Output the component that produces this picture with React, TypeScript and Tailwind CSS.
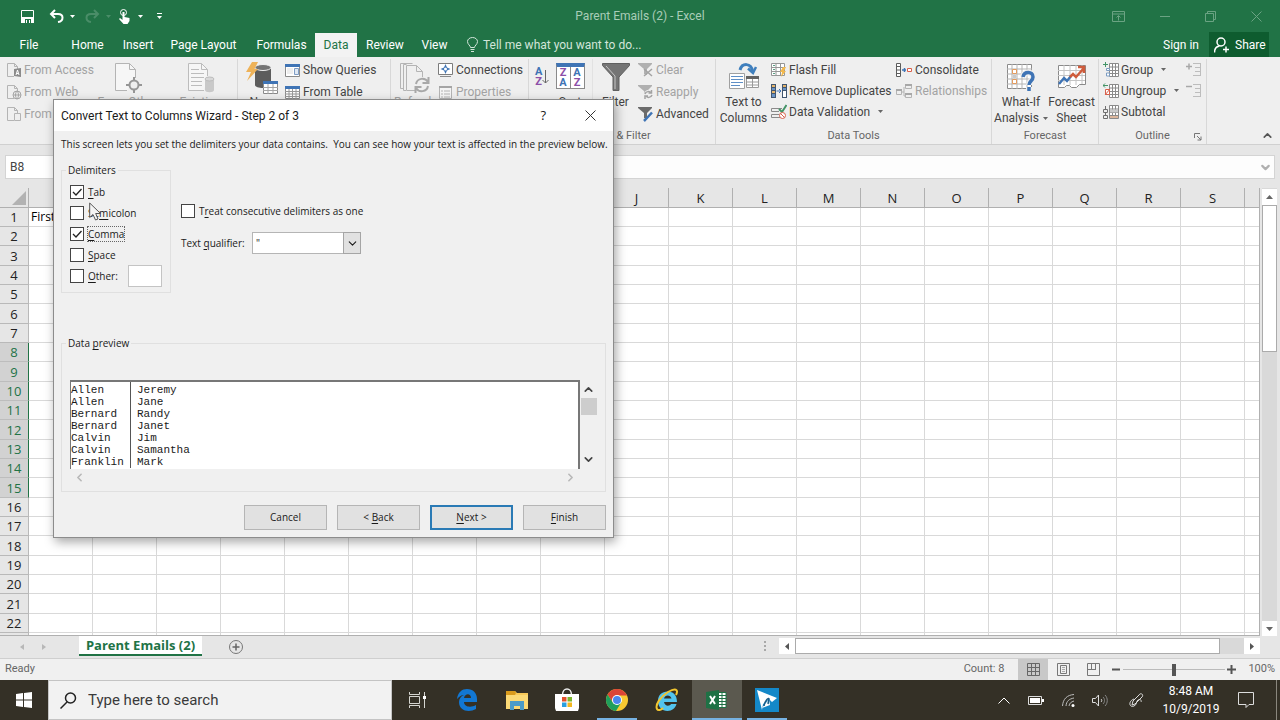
import type { ReactNode } from "react";
import clsx from "clsx";
import { ChevronDown, ChevronLeft, ChevronRight, ChevronUp } from "lucide-react";

const TABS = [
  { name: "File", width: "w-[58px]" },
  { name: "Home", width: "w-[59px]" },
  { name: "Insert", width: "w-[42px]" },
  { name: "Page Layout", width: "w-[89px]" },
  { name: "Formulas", width: "w-[67px]" },
  { name: "Data", width: "w-[42px]" },
  { name: "Review", width: "w-[56px]" },
  { name: "View", width: "w-[43px]" },
];

const COLUMNS = "ABCDEFGHIJKLMNOPQRS".split("");
const ROWS = Array.from({ length: 22 }, (_, i) => i + 1);

const PREVIEW = [
  ["Allen", "Jeremy"],
  ["Allen", "Jane"],
  ["Bernard", "Randy"],
  ["Bernard", "Janet"],
  ["Calvin", "Jim"],
  ["Calvin", "Samantha"],
  ["Franklin", "Mark"],
];

function Svg({ w, h, children }: { w: number; h: number; children: ReactNode }) {
  return (
    <svg width={w} height={h} viewBox={`0 0 ${w} ${h}`} fill="none" className="shrink-0" aria-hidden="true">
      {children}
    </svg>
  );
}

function Caret({ className }: { className?: string }) {
  return (
    <svg width="5" height="3" viewBox="0 0 5 3" className={clsx("shrink-0", className)} aria-hidden="true">
      <path d="M0 0h5L2.5 3z" fill="currentColor" />
    </svg>
  );
}

/* ---------- small ribbon icons (16px) ---------- */

function PageIcon({ kind }: { kind: "access" | "web" | "text" }) {
  return (
    <Svg w={15} h={16}>
      <path d="M7 14.500H.5V1.500h7l3 3V7" stroke="#b4b4b4" />
      <path d="M7.500 1.500v3h3" stroke="#b4b4b4" />
      {kind === "access" && (
        <>
          <path d="M7 7l7-1v9l-7-1z" fill="#8b8b8b" />
          <path d="M9 13l1.500-5 1.500 5M9.500 11.500h2" stroke="#fff" />
        </>
      )}
      {kind === "web" && (
        <>
          <circle cx="10" cy="11" r="4" fill="#eee" stroke="#a5a5a5" />
          <path d="M6 11h8M10 7c-2 2-2 6 0 8c2-2 2-6 0-8" stroke="#a5a5a5" />
        </>
      )}
      {kind === "text" && <path d="M7.500 7.500h6v7h-6z" fill="#eee" stroke="#b4b4b4" />}
    </Svg>
  );
}

function TableIcon({ pane }: { pane?: boolean }) {
  return (
    <Svg w={16} h={16}>
      <path d="M.5 2.500h14v12H.5z" fill="#fff" stroke="#8a8a8a" />
      <path d="M0 2h15v3H0z" fill="#3f74b5" />
      {pane ? (
        <>
          <path d="M2 7h6M2 9h6M2 11h6" stroke="#ddd" />
          <path d="M9.500 6.500h4v6h-4z" fill="#dfe8f3" stroke="#7e9cc4" />
        </>
      ) : (
        <path d="M0 7.500h15M0 10h15M0 12.500h15M4 5v10M7.500 5v10M11 5v10" stroke="#9a9a9a" />
      )}
    </Svg>
  );
}

function ConnectionsIcon() {
  return (
    <Svg w={16} h={16}>
      <path d="M.5 1.500h14v11H.5z" fill="#fff" stroke="#7c7c7c" />
      <path d="M7.500 2l1.500 3.500L12.500 7 9 8.500 7.500 12 6 8.500 2.500 7 6 5.500z" fill="#3f74b5" />
      <circle cx="7.500" cy="7" r="1.500" fill="#fff" />
      <path d="M2 14.500h11" stroke="#8a8a8a" />
    </Svg>
  );
}

function PropertiesIcon() {
  return (
    <Svg w={16} h={16}>
      <path d="M1.500 2.500h12v12h-12z" fill="#f4f4f4" stroke="#b4b4b4" />
      <path d="M1 3h13" stroke="#a5a5a5" strokeWidth="2" />
      <path d="M3 7h2M3 10h2M3 13h2M6 7h6M6 10h6M6 13h6" stroke="#b4b4b4" />
    </Svg>
  );
}

function FunnelIcon({ kind }: { kind: "clear" | "reapply" | "advanced" }) {
  const color = kind === "advanced" ? "#6b6b6b" : "#b0b0b0";
  return (
    <Svg w={16} h={16}>
      <path d="M0 1h14v1L9 7v6l-3-1V7L0 2z" fill={color} />
      {kind === "clear" && <path d="M6 7l8 7M14 7l-8 7" stroke="#a3a3a3" strokeWidth="1.500" />}
      {kind === "reapply" && (
        <>
          <circle cx="10.500" cy="10.500" r="4.500" fill="#efefef" />
          <path d="M7 10c1-3 5-3 6-1M14 11c-1 3-5 3-6 1M13.500 6v3h-3M7 15v-3h3" stroke="#a3a3a3" strokeWidth="1.500" />
        </>
      )}
      {kind === "advanced" && <path d="M14 6.500l-6 6.500-2 2" stroke="#3f74b5" strokeWidth="2.500" />}
    </Svg>
  );
}

function FlashFillIcon() {
  return (
    <Svg w={16} h={16}>
      <path d="M.5 1.500h13v12H.5zM0 5.500h14M0 9.500h14M5 1v13M9.500 1v13" fill="#fff" stroke="#969696" />
      <path d="M2 3.500h2M2 7.500h2M2 11.500h2" stroke="#58a083" />
      <path d="M12 5l-3 5h2l-1 5 5-6h-2l2-4z" fill="#f3b94d" />
    </Svg>
  );
}

function DuplicatesIcon() {
  return (
    <Svg w={16} h={16}>
      <path d="M0 1h5v14H0zM11 1h5v14h-5z" fill="#42566f" />
      <path d="M1 2h3v2H1zM1 8h3v2H1zM12 2h3v2h-3z" fill="#e5b56c" />
      <path d="M1 5h3v2H1zM1 11h3v3H1zM12 5h3v2h-3z" fill="#6a94c7" />
      <path d="M12 8h3v6h-3z" fill="#fff" />
      <path d="M5.500 8H10M8 6l2 2-2 2" stroke="#3f74b5" />
    </Svg>
  );
}

function ValidationIcon() {
  return (
    <Svg w={16} h={16}>
      <path d="M11 4.500H.5v3H8M8 10.500H.5v3H9" stroke="#8a8a8a" />
      <path d="M8 5l3 3 4.500-7" stroke="#439467" strokeWidth="2" />
      <circle cx="11.500" cy="11.500" r="3" fill="#fff" stroke="#d8614c" />
      <path d="M9.500 9.500l4 4" stroke="#d8614c" />
    </Svg>
  );
}

function ConsolidateIcon() {
  return (
    <Svg w={17} h={16}>
      <path d="M.5 1.500h4v13h-4zM0 4.500h5M0 8h5M0 11.500h5" fill="#fff" stroke="#5c5c5c" />
      <path d="M6 8h4M8.500 6v4" stroke="#3f74b5" strokeWidth="1.500" />
      <path d="M11.500 6.500h4v3h-4z" fill="#fff" stroke="#d8614c" />
    </Svg>
  );
}

function RelationsIcon() {
  return (
    <Svg w={17} h={16}>
      <path d="M.5 6.500h5v5h-5zM9.500 1.500h6v4h-6zM9.500 10.500h6v4h-6zM6 9h2M8 4v9h1" stroke="#b4b4b4" />
      <path d="M0 7h6M9 2h7M9 11h7" stroke="#a8a8a8" strokeWidth="2" />
    </Svg>
  );
}

function OutlineIcon({ kind }: { kind: "group" | "ungroup" | "subtotal" }) {
  return (
    <Svg w={16} h={16}>
      <path d="M6.500 1.500h9v13h-9zM6 5h10M6 8.500h10M6 11.500h10M9.500 1v14M12.500 1v14" fill="#fff" stroke="#8a8a8a" />
      {kind === "subtotal" ? (
        <>
          <path d="M.5 5.500h4v3h-4zM.5 11.500h4v3h-4zM2.500 2v3M2.500 9v2" stroke="#6f6f6f" />
          <path d="M7 5.500h8v3H7z" fill="#c9c9c9" />
          <path d="M7 12h8v2H7z" fill="#ddb79d" />
        </>
      ) : (
        <>
          <path d={kind === "group" ? "M0 2.500h5M2.500 0v5" : "M5 2.500H0M2 .5l-2 2 2 2"} stroke="#439467" />
          <path
            d={kind === "group" ? "M3.500 6.500h3v2h-3zM3.500 11h3v3h-3z" : "M2.500 6.500h4v5h-4zM2 12l5-6"}
            fill="#fff"
            stroke={kind === "group" ? "#7b9cc2" : "#d8614c"}
          />
        </>
      )}
    </Svg>
  );
}

function DetailIcon({ plus }: { plus?: boolean }) {
  return (
    <Svg w={16} h={16}>
      <path d={plus ? "M0 4.500h6M3 1.500v6" : "M0 3.500h6"} stroke="#a8a8a8" strokeWidth="1.500" />
      <path d="M7 1.500h8M9 5.500h6M9 9.500h6M7 13.500h8M14.500 1v13" stroke="#bdbdbd" />
    </Svg>
  );
}

/* ---------- large ribbon icons ---------- */

function OtherSourcesIcon() {
  return (
    <Svg w={28} h={32}>
      <path d="M13 28.500H1.500v-27h14l6 6V16" fill="#f6f6f6" stroke="#b4b4b4" />
      <path d="M15.500 1.500v6h6" stroke="#b4b4b4" />
      <circle cx="20" cy="23" r="4.500" fill="#eee" stroke="#969696" strokeWidth="2" />
      <path d="M20 15v4M20 27v4M12 23h4M24 23h4" stroke="#969696" strokeWidth="2" />
    </Svg>
  );
}

function ExistingIcon() {
  return (
    <Svg w={28} h={32}>
      <path d="M17 28.500H1.500v-27h13l6 6V14" fill="#f6f6f6" stroke="#bcbcbc" />
      <path d="M14.500 1.500v6h6M4 7.500h8M4 11.500h13M4 15.500h13M4 19.500h11M4 23.500h11" stroke="#bcbcbc" />
      <path d="M18 17v11c0 3 9 3 9 0V17" fill="#c9c9c9" />
      <ellipse cx="22.500" cy="17" rx="4.500" ry="2" fill="#d8d8d8" stroke="#bcbcbc" />
    </Svg>
  );
}

function NewQueryIcon() {
  return (
    <Svg w={32} h={32}>
      <path d="M9 6v17c0 4 16 4 16 0V6" fill="#5c5c5c" />
      <ellipse cx="17" cy="5.500" rx="8" ry="3" fill="#747474" stroke="#efefef" />
      <path d="M6 0h6L8.500 7H12L1 19l4-9H0z" fill="#eeb258" />
      <path d="M17.500 19.500h14v12h-14z" fill="#fff" stroke="#8a8a8a" />
      <path d="M17 19h15v3H17z" fill="#3f74b5" />
      <path d="M17 25.500h15M17 28.500h15M22 22v10M27 22v10" stroke="#a5a5a5" />
    </Svg>
  );
}

function RefreshIcon() {
  return (
    <Svg w={30} h={32}>
      <path d="M3 26.500H.5v-25h12M6 28.500H3.500v-26h3" stroke="#b4b4b4" />
      <path d="M15 28.500H6.500v-25h10l6 6V15M16.500 3.500v6h6" stroke="#b4b4b4" />
      <circle cx="22" cy="23" r="7" fill="#efefef" />
      <path d="M16 22c1-6 9-7 12-2M28 24c-1 6-9 7-12 2M28.500 15v6h-6M15.500 31v-6h6" stroke="#a8a8a8" strokeWidth="2" />
    </Svg>
  );
}

function LetterPair({ top, bottom }: { top: string; bottom: string }) {
  return (
    <span className="flex flex-col text-[11px] leading-[10px] font-bold">
      <span className={top === "A" ? "text-[#3f74b5]" : "text-[#8d4fa8]"}>{top}</span>
      <span className={bottom === "A" ? "text-[#3f74b5]" : "text-[#8d4fa8]"}>{bottom}</span>
    </span>
  );
}

function SortIcon() {
  return (
    <span className="mt-px flex h-[26px] w-[29px] border border-t-4 border-[#8a8a8a] border-t-[#3f74b5] bg-white">
      <span className="flex flex-1 items-center justify-center border-r border-[#8a8a8a]">
        <LetterPair top="Z" bottom="A" />
      </span>
      <span className="flex flex-1 items-center justify-center">
        <LetterPair top="A" bottom="Z" />
      </span>
    </span>
  );
}

function FilterIcon() {
  return (
    <Svg w={28} h={32}>
      <path d="M.5 1.500h27v2L17 15v13.500h-6V15L.5 3.500z" fill="#757575" stroke="#606060" />
      <path d="M4 4l9 10v13" stroke="#c7c7c7" />
    </Svg>
  );
}

function TextToColumnsIcon() {
  return (
    <Svg w={32} h={32}>
      <path d="M1.500 11.500h15v15h-15z" fill="#fff" stroke="#a0a0a0" />
      <path d="M3 14.500h12M3 17.500h12M3 20.500h12M3 23.500h9" stroke="#5f8fc6" />
      <path d="M18.500 14.500h12v11h-12zM24.500 14v12M18 20h13M18 23h13" fill="#fff" stroke="#9a9a9a" />
      <path d="M18 14h13v3H18z" fill="#636363" />
      <path d="M12 8c2-7 11-8 13 2" stroke="#3f7fbd" strokeWidth="3" />
      <path d="M20 6.500l5 4.500 3-6" stroke="#3f7fbd" strokeWidth="2.500" />
    </Svg>
  );
}

function WhatIfIcon() {
  return (
    <Svg w={30} h={32}>
      <path d="M1.500 2.500h24v24h-24z" fill="#fff" stroke="#8a8a8a" />
      <path d="M1 7h25M1 12h25M1 17h25M1 22h25M6 2v25M11 2v25M16 2v25M21 2v25" stroke="#b5b5b5" />
      <path d="M6.500 7.500h4v4h-4zM6.500 17.500h4v4h-4z" fill="#fff" stroke="#e39b5e" />
      <circle cx="8.500" cy="14.500" r="2" fill="#c9c9c9" />
      <path d="M17 15c1-6 10-6 10 0c0 4-4 4-4 8M23 25v4" stroke="#efefef" strokeWidth="6" />
      <path d="M17 15c1-6 10-6 10 0c0 4-4 4-4 8M23 25v4" stroke="#3f74b5" strokeWidth="3.500" />
    </Svg>
  );
}

function ForecastIcon() {
  return (
    <Svg w={30} h={32}>
      <path d="M1.500 3.500h27v19h-6l-3 3h-5l-2-2h-3l-2 2h-6z" fill="#fff" stroke="#8a8a8a" />
      <path d="M1 8.500h27M1 13.500h27M1 18.500h27M7 3v20M13 3v20M19 3v20M25 3v19" stroke="#c4c4c4" />
      <path d="M2 22l5-6 3 3 4-5" stroke="#3f74b5" strokeWidth="2.500" />
      <path d="M13 15l3-3 3 3 8-9M21 5h6v6" stroke="#cf5c3c" strokeWidth="2.500" />
    </Svg>
  );
}

/* ---------- ribbon building blocks ---------- */

function SmallButton({
  icon,
  label,
  muted,
  menu,
  tight,
}: {
  icon: ReactNode;
  label: string;
  muted?: boolean;
  menu?: boolean;
  tight?: boolean;
}) {
  return (
    <button
      className={clsx(
        "flex items-center gap-0.5 whitespace-nowrap",
        tight ? "h-[21px]" : "h-[22px]",
        muted ? "text-[#a3a3a3]" : "text-[#444]",
      )}
    >
      {icon}
      {label}
      {menu && <Caret className="ml-1.5 text-[#666]" />}
    </button>
  );
}

function BigButton({
  icon,
  lines,
  width,
  muted,
  menu,
}: {
  icon: ReactNode;
  lines: string[];
  width: string;
  muted?: boolean;
  menu?: boolean;
}) {
  return (
    <button
      className={clsx("flex shrink-0 flex-col items-center pt-[3px] leading-4", width, muted ? "text-[#a3a3a3]" : "text-[#444]")}
    >
      <span className="flex h-8 items-start justify-center">{icon}</span>
      {lines.map((line, i) => (
        <span key={line} className="flex items-center gap-1 whitespace-nowrap">
          {line}
          {menu && i === lines.length - 1 && <Caret className="text-[#666]" />}
        </span>
      ))}
    </button>
  );
}

function Group({ label, width, children, launcher }: { label: string; width: string; children: ReactNode; launcher?: boolean }) {
  return (
    <section className={clsx("flex shrink-0 flex-col border-r border-[#d8d8d8]", width)}>
      <div className="flex h-[68px] overflow-hidden">{children}</div>
      <div className="flex h-[17px] items-center pt-0.5 text-[11px] text-[#666]">
        <span className="flex-1 text-center">{label}</span>
        {launcher && (
          <button aria-label={`${label} settings`} className="-ml-3 w-3 shrink-0">
            <Svg w={8} h={8}>
              <path d="M.5 5V.5H6M3 3l4 4M7 3.500V7H3.500" stroke="#777" />
            </Svg>
          </button>
        )}
      </div>
    </section>
  );
}

function Ribbon() {
  return (
    <div className="flex h-[88px] shrink-0 border-b border-[#d0d0d0] bg-[#efefef] pt-0.5 text-xs">
      <Group label="Get External Data" width="w-[238px]">
        <div className="flex w-[91px] flex-col pl-[7px]">
          <SmallButton muted icon={<PageIcon kind="access" />} label="From Access" />
          <SmallButton muted icon={<PageIcon kind="web" />} label="From Web" />
          <SmallButton muted icon={<PageIcon kind="text" />} label="From Text" />
        </div>
        <BigButton muted width="w-[73px]" icon={<OtherSourcesIcon />} lines={["From Other", "Sources"]} menu />
        <div className="w-px bg-[#e2e2e2]" />
        <BigButton muted width="w-[73px]" icon={<ExistingIcon />} lines={["Existing", "Connections"]} />
      </Group>
      <Group label="Get & Transform" width="w-[153px]">
        <BigButton width="w-[47px]" icon={<NewQueryIcon />} lines={["New", "Query"]} menu />
        <div className="flex flex-col">
          <SmallButton icon={<TableIcon pane />} label="Show Queries" />
          <SmallButton icon={<TableIcon />} label="From Table" />
          <SmallButton icon={<TableIcon pane />} label="Recent Sources" />
        </div>
      </Group>
      <Group label="Connections" width="w-[138px]">
        <BigButton muted width="w-[47px]" icon={<RefreshIcon />} lines={["Refresh", "All"]} menu />
        <div className="flex flex-col">
          <SmallButton icon={<ConnectionsIcon />} label="Connections" />
          <SmallButton muted icon={<PropertiesIcon />} label="Properties" />
          <SmallButton muted icon={<PropertiesIcon />} label="Edit Links" />
        </div>
      </Group>
      <Group label="Sort & Filter" width="w-[187px]">
        <button aria-label="Sort A to Z" className="flex h-9 w-[24px] shrink-0 items-center pl-1.5">
          <LetterPair top="A" bottom="Z" />
          <Svg w={7} h={16}>
            <path d="M3.500 1v13M.5 11l3 3 3-3" stroke="#666" />
          </Svg>
        </button>
        <BigButton width="w-[34px]" icon={<SortIcon />} lines={["Sort"]} />
        <div className="ml-[5px] w-px bg-[#e2e2e2]" />
        <BigButton width="w-[45px]" icon={<FilterIcon />} lines={["Filter"]} />
        <div className="flex flex-col">
          <SmallButton muted icon={<FunnelIcon kind="clear" />} label="Clear" />
          <SmallButton muted icon={<FunnelIcon kind="reapply" />} label="Reapply" />
          <SmallButton icon={<FunnelIcon kind="advanced" />} label="Advanced" />
        </div>
      </Group>
      <Group label="Data Tools" width="w-[276px]">
        <BigButton width="w-[55px]" icon={<TextToColumnsIcon />} lines={["Text to", "Columns"]} />
        <div className="flex w-[125px] flex-col">
          <SmallButton tight icon={<FlashFillIcon />} label="Flash Fill" />
          <SmallButton tight icon={<DuplicatesIcon />} label="Remove Duplicates" />
          <SmallButton tight icon={<ValidationIcon />} label="Data Validation" menu />
        </div>
        <div className="flex flex-col">
          <SmallButton tight icon={<ConsolidateIcon />} label="Consolidate" />
          <SmallButton tight muted icon={<RelationsIcon />} label="Relationships" />
        </div>
      </Group>
      <Group label="Forecast" width="w-[107px]">
        <BigButton width="w-[58px]" icon={<WhatIfIcon />} lines={["What-If", "Analysis"]} menu />
        <BigButton width="w-[43px]" icon={<ForecastIcon />} lines={["Forecast", "Sheet"]} />
      </Group>
      <Group label="Outline" width="w-[108px]" launcher>
        <div className="flex w-[87px] flex-col pl-1">
          <SmallButton tight icon={<OutlineIcon kind="group" />} label="Group" menu />
          <SmallButton tight icon={<OutlineIcon kind="ungroup" />} label="Ungroup" menu />
          <SmallButton tight icon={<OutlineIcon kind="subtotal" />} label="Subtotal" />
        </div>
        <div className="flex flex-col">
          <button aria-label="Show Detail" className="flex h-[21px] items-center">
            <DetailIcon plus />
          </button>
          <button aria-label="Hide Detail" className="flex h-[21px] items-center">
            <DetailIcon />
          </button>
        </div>
      </Group>
      <button aria-label="Collapse the Ribbon" className="mt-auto mr-1.5 mb-0.5 ml-auto text-[#555]">
        <ChevronUp size={13} strokeWidth={3} />
      </button>
    </div>
  );
}

function TitleBar() {
  return (
    <header className="grid h-8 shrink-0 grid-cols-[1fr_auto_1fr] items-center bg-[#217346] text-xs text-[#a9cdb8]">
      <div className="flex items-center pl-[21px] text-white">
        <button aria-label="Save">
          <Svg w={13} h={13}>
            <path d="M.5.5h12v12H2L.5 11z" stroke="#fff" />
            <path d="M0 7h13v6H0z" fill="#fff" />
            <path d="M4 9h6v4H4z" fill="#217346" />
            <path d="M5 10h1v3H5zM8 10h1v3H8z" fill="#fff" />
          </Svg>
        </button>
        <button aria-label="Undo" className="ml-[15px] flex items-center gap-1.5">
          <Svg w={15} h={14}>
            <path d="M6 1L2 5l4 4M2 5h7c6 0 6 7 0 8" stroke="#fff" strokeWidth="2" />
          </Svg>
          <Caret />
        </button>
        <button aria-label="Redo" className="ml-2.5 flex items-center gap-1.5 text-[#4a8d68]">
          <Svg w={15} h={14}>
            <path d="M9 1l4 4-4 4M13 5H6c-6 0-6 7 0 8" stroke="#4a8d68" strokeWidth="2" />
          </Svg>
          <Caret />
        </button>
        <button aria-label="Touch Mode" className="ml-2 flex items-center gap-2">
          <Svg w={11} h={15}>
            <circle cx="4.500" cy="3.500" r="3" stroke="#fff" />
            <path d="M3.500 3h2v5l5 1v3l-2 3h-4L0 10l1-1 2.500 2z" fill="#fff" />
          </Svg>
          <Caret />
        </button>
        <button aria-label="Customize Quick Access Toolbar" className="ml-[14px] flex flex-col gap-0.5">
          <span className="h-px w-[5px] bg-white" />
          <Caret />
        </button>
      </div>
      <h1>Parent Emails (2) - Excel</h1>
      <div className="flex items-center justify-end pr-[18px]">
        <button aria-label="Ribbon Display Options">
          <Svg w={13} h={11}>
            <path d="M.5.5h12v10H.5zM0 3h13M6.500 9.500V5M4.500 6.500l2-2 2 2" stroke="#6ba383" />
          </Svg>
        </button>
        <button aria-label="Minimize" className="ml-[35px]">
          <Svg w={10} h={11}>
            <path d="M0 5.500h10" stroke="#6ba383" />
          </Svg>
        </button>
        <button aria-label="Restore" className="ml-[35px]">
          <Svg w={11} h={11}>
            <path d="M.5 2.500h8v8h-8zM2.500 2V.5h8v8H9" stroke="#6ba383" />
          </Svg>
        </button>
        <button aria-label="Close" className="ml-[35px]">
          <Svg w={11} h={11}>
            <path d="M.5.5l10 10M10.500.5l-10 10" stroke="#6ba383" />
          </Svg>
        </button>
      </div>
    </header>
  );
}

function RibbonTabs() {
  return (
    <nav className="flex h-[25px] shrink-0 items-stretch bg-[#217346] text-xs text-white">
      {TABS.map((tab) => (
        <button
          key={tab.name}
          className={clsx("text-center whitespace-nowrap", tab.width, tab.name === "Data" && "mt-px bg-[#f3f3f3] text-[#217346]")}
        >
          {tab.name}
        </button>
      ))}
      <button className="ml-[11px] flex items-center gap-[5px] text-[#d3e5da]">
        <Svg w={11} h={15}>
          <path d="M3.500 10.500c0-2-3-3-3-6a5 4 0 0 1 10 0c0 3-3 4-3 6zM3.500 12.500h4M4 14.500h3" stroke="#d3e5da" />
        </Svg>
        Tell me what you want to do...
      </button>
      <a href="#signin" className="ml-auto flex items-center">
        Sign in
      </a>
      <button className="mr-[11px] ml-2.5 flex w-[60px] items-center gap-1.5 bg-[#0e5c2f] pl-[5px]">
        <Svg w={15} h={16}>
          <circle cx="7" cy="5" r="4" stroke="#fff" strokeWidth="1.500" />
          <path d="M.5 15.500c0-4 2-6 5-6.500M9 12.500h6M12 9.500v6" stroke="#fff" strokeWidth="1.500" />
        </Svg>
        Share
      </button>
    </nav>
  );
}

function FormulaBar() {
  return (
    <div className="flex h-[43px] shrink-0 gap-2.5 bg-[#e6e6e6] pt-2.5 pr-[5px] pb-[9px] pl-[5px]">
      <input aria-label="Name Box" defaultValue="B8" className="w-[110px] border border-[#d4d4d4] bg-white px-1 text-xs text-[#444]" />
      <div className="flex flex-1 items-center border border-[#d4d4d4] bg-[#fdfdfd] pr-0.5 text-[#b0b0b0]">
        <input aria-label="Formula Bar" className="h-full flex-1 px-1 text-xs text-[#444] outline-none" />
        <ChevronDown size={13} strokeWidth={4} />
      </div>
    </div>
  );
}

function Sheet() {
  return (
    <div className="flex min-h-0 flex-1 bg-[#e6e6e6]">
      <div className="flex-1 overflow-hidden border-r border-b border-[#b0b0b0] bg-white">
        <table className="w-full table-fixed border-separate border-spacing-0 bg-white font-['Open_Sans','Noto_Sans',sans-serif] text-[13px] leading-[18px]">
          <thead>
            <tr className="h-5 bg-[#e6e6e6] text-[#222]">
              <th className="w-[29px] border-r border-b border-[#b0b0b0] p-0">
                <svg width="14" height="14" viewBox="0 0 14 14" className="mr-0.5 ml-auto block" aria-hidden="true">
                  <path d="M14 0v14H0z" fill="#b2b2b2" />
                </svg>
              </th>
              {COLUMNS.map((col) => (
                <th key={col} className="w-16 border-r border-b border-[#b0b0b0] p-0 text-center font-normal">
                  {col}
                </th>
              ))}
              <th className="border-b border-[#b0b0b0] p-0" />
            </tr>
          </thead>
          <tbody>
            {ROWS.map((row) => (
              <tr key={row} className="h-[19px] nth-[3n]:h-5">
                <th
                  className={clsx(
                    "border-r border-b p-0 text-center font-normal",
                    row >= 8 && row <= 15
                      ? "border-r-[#217346] border-b-[#bdbdbd] bg-[#d2d2d2] text-[#217346]"
                      : "border-[#b9b9b9] bg-[#e6e6e6] text-[#222]",
                  )}
                >
                  {row}
                </th>
                {COLUMNS.map((col) => (
                  <td key={col} className="border-r border-b border-[#d9d9d9] p-0 pl-0.5 text-xs whitespace-nowrap text-black">
                    {row === 1 && col === "A" && "First"}
                  </td>
                ))}
                <td className="border-b border-[#d9d9d9] p-0" />
              </tr>
            ))}
            <tr className="h-[19px]">
              <th className="border-r border-[#b9b9b9] bg-[#e6e6e6] p-0" />
              {COLUMNS.map((col) => (
                <td key={col} className="border-r border-[#d9d9d9] p-0" />
              ))}
              <td className="p-0" />
            </tr>
          </tbody>
        </table>
      </div>
      <div className="mr-[3px] ml-[2px] flex w-[15px] flex-col bg-[#d9d9d9] pt-px">
        <button aria-label="Scroll up" className="flex h-4 items-center justify-center bg-white">
          <Svg w={7} h={4}>
            <path d="M0 4h7L3.500 0z" fill="#666" />
          </Svg>
        </button>
        <div className="h-[147px] border border-[#ababab] bg-white" />
        <button aria-label="Scroll down" className="mt-auto flex h-[15px] items-center justify-center bg-white">
          <Svg w={7} h={4}>
            <path d="M0 0h7L3.500 4z" fill="#666" />
          </Svg>
        </button>
      </div>
    </div>
  );
}

function SheetTabs() {
  return (
    <div className="flex h-[23px] shrink-0 items-start border-b border-[#cfcfcf] bg-[#e6e6e6]">
      <div className="flex h-full w-[79px] items-center gap-[18px] pl-5">
        <button aria-label="Previous sheet">
          <Svg w={4} h={6}>
            <path d="M4 0v6L0 3z" fill="#b8b8b8" />
          </Svg>
        </button>
        <button aria-label="Next sheet">
          <Svg w={4} h={6}>
            <path d="M0 0v6l4-3z" fill="#b8b8b8" />
          </Svg>
        </button>
      </div>
      <button className="h-5 w-[123px] border-b-2 border-[#217346] bg-white font-['Open_Sans','Noto_Sans',sans-serif] text-[13px] leading-[18px] font-bold whitespace-nowrap text-[#217346]">
        Parent Emails (2)
      </button>
      <button aria-label="New sheet" className="ml-[27px] flex h-full items-center">
        <Svg w={14} h={14}>
          <circle cx="7" cy="7" r="6.500" stroke="#777" />
          <path d="M7 3.500v7M3.500 7h7" stroke="#666" strokeWidth="1.500" />
        </Svg>
      </button>
      <div className="ml-auto flex h-[18px] items-center pt-0.5">
        <Svg w={3} h={11}>
          <path d="M0 0h2v2H0zM0 4h2v2H0zM0 8h2v2H0z" fill="#a8a8a8" />
        </Svg>
        <div className="ml-3 flex h-4 w-[481px] bg-[#d9d9d9]">
          <button aria-label="Scroll left" className="flex w-4 items-center justify-center bg-white">
            <Svg w={4} h={7}>
              <path d="M4 0v7L0 3.500z" fill="#555" />
            </Svg>
          </button>
          <div className="w-[425px] border border-[#ababab] bg-white" />
          <button aria-label="Scroll right" className="ml-auto flex w-4 items-center justify-center bg-white">
            <Svg w={4} h={7}>
              <path d="M0 0v7l4-3.500z" fill="#555" />
            </Svg>
          </button>
        </div>
        <div className="w-5" />
      </div>
    </div>
  );
}

function StatusBar() {
  return (
    <footer className="flex h-[21px] shrink-0 items-center bg-[#f0f0f0] pr-[5px] pl-[5px] text-[11px] text-[#666]">
      <span>Ready</span>
      <span className="ml-auto">Count: 8</span>
      <button aria-label="Normal view" className="ml-[14px] flex h-full w-[30px] items-center justify-center bg-[#c8c8c8]">
        <Svg w={13} h={13}>
          <path d="M.5.5h12v12H.5zM.5 4.500h12M.5 8.500h12M4.500.5v12M8.500.5v12" stroke="#666" />
        </Svg>
      </button>
      <button aria-label="Page Layout view" className="flex h-full w-[30px] items-center justify-center">
        <Svg w={13} h={13}>
          <path d="M.5.5h12v12H.5zM3.500 2.500h6v8h-6z" stroke="#777" />
          <path d="M5 4.500h3M5 6.500h3M5 8.500h3" stroke="#aaa" />
        </Svg>
      </button>
      <button aria-label="Page Break view" className="flex h-full w-[30px] items-center justify-center">
        <Svg w={13} h={13}>
          <path d="M.5.5h12v12H.5zM4.500.5v6M8.500.5v6M1 6.500h8" stroke="#777" />
        </Svg>
      </button>
      <button aria-label="Zoom out" className="ml-1 flex">
        <Svg w={9} h={9}>
          <path d="M0 4.500h8" stroke="#555" strokeWidth="2" />
        </Svg>
      </button>
      <input
        type="range"
        aria-label="Zoom"
        defaultValue={50}
        className="mx-0.5 h-3 w-[102px] appearance-none bg-[linear-gradient(#bbb,#bbb)] bg-[length:100%_1px] bg-center bg-no-repeat [&::-webkit-slider-thumb]:h-3 [&::-webkit-slider-thumb]:w-1 [&::-webkit-slider-thumb]:appearance-none [&::-webkit-slider-thumb]:bg-[#555]"
      />
      <button aria-label="Zoom in" className="mr-3 flex">
        <Svg w={9} h={9}>
          <path d="M0 4.500h9M4.500 0v9" stroke="#555" strokeWidth="2" />
        </Svg>
      </button>
      <span>100%</span>
    </footer>
  );
}

/* ---------- wizard ---------- */

function Key({ children }: { children: ReactNode }) {
  return <span className="underline underline-offset-2">{children}</span>;
}

function CheckBox({ checked, focused, children, id }: { checked?: boolean; focused?: boolean; children: ReactNode; id: string }) {
  return (
    <div className="flex h-[21px] items-center gap-[3px]">
      <span className="grid">
        <input
          id={id}
          type="checkbox"
          defaultChecked={checked}
          className="peer col-start-1 row-start-1 size-[14px] appearance-none border border-[#444] bg-white"
        />
        <svg width="14" height="14" viewBox="0 0 14 14" className="pointer-events-none invisible col-start-1 row-start-1 peer-checked:visible" aria-hidden="true">
          <path d="M3 7l3 3 5.500-6" fill="none" stroke="#222" strokeWidth="1.300" />
        </svg>
      </span>
      <label htmlFor={id} className={clsx("border leading-[14px]", focused ? "border-dotted border-[#666]" : "border-transparent")}>
        {children}
      </label>
    </div>
  );
}

function WizardButton({ primary, children }: { primary?: boolean; children: ReactNode }) {
  return (
    <button className={clsx("h-[25px] w-[83px] bg-[#e1e1e1]", primary ? "border-2 border-[#2a7ab5]" : "border border-[#b5b5b5]")}>
      {children}
    </button>
  );
}

function Wizard() {
  return (
    <div
      role="dialog"
      aria-labelledby="wizard-title"
      className="absolute top-[99px] left-[53px] flex h-[439px] w-[561px] flex-col border border-[#8c8c8c] bg-[#f0f0f0] font-['Open_Sans','Noto_Sans',sans-serif] text-[10px] text-[#1a1a1a] shadow-[2px_4px_10px_rgba(0,0,0,0.35)]"
    >
      <div className="flex h-[31px] items-center bg-white pr-[17px] pl-[7px]">
        <h2 id="wizard-title" className="font-['Roboto','Noto_Sans',sans-serif] text-xs">
          Convert Text to Columns Wizard - Step 2 of 3
        </h2>
        <button aria-label="Help" className="ml-auto text-[13px]">
          ?
        </button>
        <button aria-label="Close wizard" className="ml-[39px]">
          <Svg w={11} h={11}>
            <path d="M.5.5l10 10M10.500.5l-10 10" stroke="#333" />
          </Svg>
        </button>
      </div>
      <div className="flex flex-1 flex-col px-[7px]">
        <p className="mt-[5px] leading-4 whitespace-pre">
          {"This screen lets you set the delimiters your data contains.  You can see how your text is affected in the preview below."}
        </p>
        <div className="mt-2.5 flex">
          <fieldset className="flex h-[131px] w-[110px] flex-col border border-[#e0e0e0] pt-[3px] pl-2">
            <legend className="-ml-1 px-0.5 leading-4">Delimiters</legend>
            <CheckBox id="tab" checked>
              <Key>T</Key>ab
            </CheckBox>
            <CheckBox id="semicolon">
              Se<Key>m</Key>icolon
            </CheckBox>
            <CheckBox id="comma" checked focused>
              <Key>C</Key>omma
            </CheckBox>
            <CheckBox id="space">
              <Key>S</Key>pace
            </CheckBox>
            <div className="flex items-center justify-between pr-2">
              <CheckBox id="other">
                <Key>O</Key>ther:
              </CheckBox>
              <input aria-label="Other delimiter" className="h-[22px] w-[34px] border border-[#c4c4c4] bg-white px-1" />
            </div>
          </fieldset>
          <div className="mt-[38px] ml-[10px] flex flex-col">
            <CheckBox id="consecutive">
              T<Key>r</Key>eat consecutive delimiters as one
            </CheckBox>
            <div className="mt-[11px] flex items-center">
              <label htmlFor="qualifier" className="w-[71px] whitespace-nowrap">
                Text <Key>q</Key>ualifier:
              </label>
              <span className="grid h-[22px] w-[109px]">
                <select
                  id="qualifier"
                  defaultValue={'"'}
                  className="col-start-1 row-start-1 appearance-none border border-[#b5b5b5] bg-white pl-[3px] leading-4"
                >
                  <option>{'"'}</option>
                  <option>{"'"}</option>
                  <option>{"{none}"}</option>
                </select>
                <span className="pointer-events-none col-start-1 row-start-1 flex w-[18px] items-center justify-center justify-self-end border border-[#a5a5a5] bg-[#e1e1e1]">
                  <ChevronDown size={13} strokeWidth={2} />
                </span>
              </span>
            </div>
          </div>
        </div>
        <fieldset className="mt-[42px] h-[157px] border border-[#e0e0e0] px-2">
          <legend className="-ml-1 px-0.5 leading-4">
            Data <Key>p</Key>review
          </legend>
          <div className="mt-[29px] flex h-[89px]">
            <div className="flex-1 overflow-hidden border-t-2 border-r-2 border-l border-[#777] bg-white">
              <table className="w-full table-fixed border-separate border-spacing-0 font-['Liberation_Mono',monospace] text-[11px] leading-3">
                <tbody>
                  {PREVIEW.map(([last, first], i) => (
                    <tr key={i} className="group">
                      <td className="w-[60px] border-r border-[#555] p-0 group-first:pt-[2px]">{last}</td>
                      <td className="p-0 pl-1.5 group-first:pt-[2px]">{first}</td>
                    </tr>
                  ))}
                </tbody>
              </table>
            </div>
            <div className="flex w-[17px] flex-col items-center py-[3px] text-[#444]">
              <ChevronUp size={13} strokeWidth={3} className="shrink-0" />
              <div className="mt-0.5 h-[17px] w-4 shrink-0 bg-[#cdcdcd]" />
              <ChevronDown size={13} strokeWidth={3} className="mt-auto shrink-0" />
            </div>
          </div>
          <div className="mt-[2px] mr-5 ml-[3px] flex justify-between text-[#b8b8b8]">
            <ChevronLeft size={13} strokeWidth={3} />
            <ChevronRight size={13} strokeWidth={3} />
          </div>
        </fieldset>
        <div className="mt-[13px] flex justify-end gap-[10px]">
          <WizardButton>Cancel</WizardButton>
          <WizardButton>
            &lt; <Key>B</Key>ack
          </WizardButton>
          <WizardButton primary>
            <Key>N</Key>ext &gt;
          </WizardButton>
          <WizardButton>
            <Key>F</Key>inish
          </WizardButton>
        </div>
      </div>
    </div>
  );
}

function Pointer() {
  return (
    <svg width="13" height="19" viewBox="0 0 13 19" className="pointer-events-none absolute top-[202px] left-[89px]" aria-hidden="true">
      <path d="M.7 1v14.500l3.300-3 2.500 5.500 2.500-1-2.300-5.500H11.500z" fill="#f4f4f4" stroke="#555" />
    </svg>
  );
}

/* ---------- taskbar ---------- */

function EdgeIcon() {
  return (
    <Svg w={20} h={22}>
      <path
        d="M0 10C1 3 5 0 10 0c6 0 10 4 10 10v3H7c0 5 7 6 12 3v4c-7 4-17 2-17-7c0-3 2-6 5-7C4 6 2 8 0 10zM7 9h7c0-5-6-5-7 0z"
        fill="#1277d3"
      />
    </Svg>
  );
}

function FolderIcon() {
  return (
    <Svg w={22} h={19}>
      <path d="M0 0h9l2 2h11v16H0z" fill="#f7c95a" />
      <path d="M0 0h9l1 2-1 2H0z" fill="#d99a1c" />
      <path d="M0 4h22v14H0z" fill="#fbd976" />
      <path d="M4 10h14v9h-4v-4H8v4H4z" fill="#4a9bc9" />
    </Svg>
  );
}

function StoreIcon() {
  return (
    <Svg w={24} h={24}>
      <path d="M7.500 7c0-8 9-8 9 0" stroke="#eee" strokeWidth="1.500" />
      <path d="M0 6h24v14l-1 3H1l-1-3z" fill="#fff" />
      <path d="M7 9h4.500v4.500H7z" fill="#e2512c" />
      <path d="M12.500 9H17v4.500h-4.500z" fill="#7bb52c" />
      <path d="M7 14.500h4.500V19H7z" fill="#2a9fe0" />
      <path d="M12.500 14.500H17V19h-4.500z" fill="#f3b71f" />
    </Svg>
  );
}

function ChromeIcon() {
  return (
    <Svg w={22} h={22}>
      <circle cx="11" cy="11" r="11" fill="#f8c931" />
      <path d="M1.500 5.500a11 11 0 0 1 19 0L21 6.500H11L6.500 13z" fill="#dc4437" />
      <path d="M1.500 5.500A11 11 0 0 0 10 22l5.500-9h-9z" fill="#1f9f5b" />
      <circle cx="11" cy="11" r="5" fill="#fff" />
      <circle cx="11" cy="11" r="4" fill="#4a86ee" />
    </Svg>
  );
}

function IeIcon() {
  return (
    <Svg w={24} h={24}>
      <path
        d="M3 13C3 7 7 3.500 12.500 3.500c6 0 9.500 4 9.500 10.500H9c1 5 6 4 7 2h5.500c-1 4-4.500 7-9 7C7 23 3 19 3 13zM9 10.500h7.500c-1-4-6.500-4-7.500 0z"
        fill="#52c4ee"
      />
      <path d="M21 7c3-6-1-7-8-3C5 9 0 17 2 21c1 2 4 1 6-1" stroke="#f2c52f" strokeWidth="2" />
    </Svg>
  );
}

function ExcelIcon() {
  return (
    <Svg w={22} h={20}>
      <path d="M11 2.500h9v15h-9z" fill="#fff" stroke="#1e7145" />
      <path d="M12 5.500h8M12 8.500h8M12 11.500h8M12 14.500h8M16 3v14" stroke="#1e7145" />
      <path d="M0 2l13-2v20L0 18z" fill="#1e7145" />
      <path d="M4 6l5 8M9 6l-5 8" stroke="#fff" strokeWidth="2" />
    </Svg>
  );
}

function PlayerIcon() {
  return (
    <Svg w={24} h={24}>
      <path d="M0 0h24v24H0z" fill="#1488c8" />
      <path d="M2 2l20 8-5 4-3-3-6 5-1 6z" fill="#fff" />
      <path d="M7 20l7-9 1 6z" fill="#fff" />
      <path d="M9 18c1-6 5-9 5-7l-1 5" stroke="#1a5c86" strokeWidth="1.500" />
    </Svg>
  );
}

function TaskButton({ label, active, open, children }: { label: string; active?: boolean; open?: boolean; children: ReactNode }) {
  return (
    <button aria-label={label} className={clsx("flex w-[50px] flex-col items-center", active && "bg-[#5b594f]")}>
      <span className="flex h-full items-center">{children}</span>
      <span className={clsx("-mt-0.5 h-0.5 shrink-0", active ? "w-full bg-[#76b2e2]" : open && "w-10 bg-[#76b2e2]")} />
    </button>
  );
}

function Taskbar() {
  return (
    <div className="flex h-10 shrink-0 items-stretch bg-[#343026] text-white">
      <button aria-label="Start" className="flex w-12 items-center justify-center">
        <Svg w={16} h={16}>
          <path d="M0 2l7-1v6.500H0zM8 1l8-1v7.500H8zM0 8.500h7V15l-7-1zM8 8.500h8V16l-8-1z" fill="#fff" />
        </Svg>
      </button>
      <label className="flex w-[344px] items-center gap-[11px] border border-[#c4c4c4] bg-[#f2f2f2] pl-[11px]">
        <Svg w={17} h={17}>
          <circle cx="10.500" cy="6" r="5" stroke="#222" strokeWidth="1.500" />
          <path d="M7 10l-6.500 6.500" stroke="#222" strokeWidth="1.500" />
        </Svg>
        <input
          type="search"
          aria-label="Search"
          placeholder="Type here to search"
          className="flex-1 text-[15px] text-[#333] outline-none placeholder:text-[#3a3a3a]"
        />
      </label>
      <div className="flex">
        <TaskButton label="Task View">
          <Svg w={17} h={16}>
            <path d="M.5 0v2.500h10V0M.5 16v-2.500h10V16M.5 4.500h10v7H.5zM15.500 0v16" stroke="#d5d5d0" />
            <path d="M14 4h3v3h-3z" fill="#fff" />
          </Svg>
        </TaskButton>
        <TaskButton label="Microsoft Edge">
          <EdgeIcon />
        </TaskButton>
        <TaskButton label="File Explorer">
          <FolderIcon />
        </TaskButton>
        <TaskButton label="Microsoft Store">
          <StoreIcon />
        </TaskButton>
        <TaskButton label="Google Chrome" open>
          <ChromeIcon />
        </TaskButton>
        <TaskButton label="Internet Explorer">
          <IeIcon />
        </TaskButton>
        <TaskButton label="Excel" active>
          <ExcelIcon />
        </TaskButton>
        <TaskButton label="Media Player" open>
          <PlayerIcon />
        </TaskButton>
      </div>
      <div className="ml-auto flex items-center text-xs leading-[18px]">
        <button aria-label="Show hidden icons" className="mr-[18px]">
          <Svg w={12} h={7}>
            <path d="M.5 6.500L6 1l5.500 5.500" stroke="#fff" />
          </Svg>
        </button>
        <button aria-label="Battery" className="mr-[18px]">
          <Svg w={16} h={9}>
            <path d="M.5.5h13v8H.5z" stroke="#ddd" />
            <path d="M2 2h10v5H2zM14 3h2v3h-2z" fill="#fff" />
          </Svg>
        </button>
        <button aria-label="Network" className="mr-[17px]">
          <Svg w={13} h={13}>
            <path d="M.5 12C1 5 5 1 12 .5M4 12c.500-5 3-7 8-8M7 12c.500-3 2-4 5-5" stroke="#bbb" />
            <circle cx="11" cy="11.500" r="1.500" fill="#fff" />
          </Svg>
        </button>
        <button aria-label="Volume" className="mr-[21px]">
          <Svg w={16} h={13}>
            <path d="M.5 4.500h3l3-3.500v11l-3-3.500h-3z" stroke="#ddd" />
            <path d="M9 5c1 1 1 2 0 3" stroke="#ddd" />
            <path d="M11 3c2 2 2 5 0 7M13 1c3 3 3 8 0 11" stroke="#888" />
          </Svg>
        </button>
        <button aria-label="Windows Ink" className="mr-3.5">
          <Svg w={15} h={14}>
            <path d="M4 8l6-6c2-3 5 0 3 2l-7 7-3 1zM5 6c-6 2-5 9 0 7c3-1 2-5 4-6c2-1 4 0 3 2" stroke="#ddd" />
          </Svg>
        </button>
        <button className="flex w-[66px] flex-col items-center">
          <span>8:48 AM</span>
          <span>10/9/2019</span>
        </button>
        <button aria-label="Notifications" className="mr-[22px] ml-[14px]">
          <Svg w={16} h={16}>
            <path d="M.5.5h15v12H11l-3 3v-3H.5z" stroke="#ddd" />
          </Svg>
        </button>
        <button aria-label="Show desktop" className="h-full w-1 border-l border-[#8a877e]" />
      </div>
    </div>
  );
}

export default function App() {
  return (
    <div className="relative flex h-screen flex-col overflow-hidden font-['Roboto','Noto_Sans',sans-serif]">
      <TitleBar />
      <RibbonTabs />
      <Ribbon />
      <FormulaBar />
      <Sheet />
      <SheetTabs />
      <StatusBar />
      <Taskbar />
      <Wizard />
      <Pointer />
    </div>
  );
}
